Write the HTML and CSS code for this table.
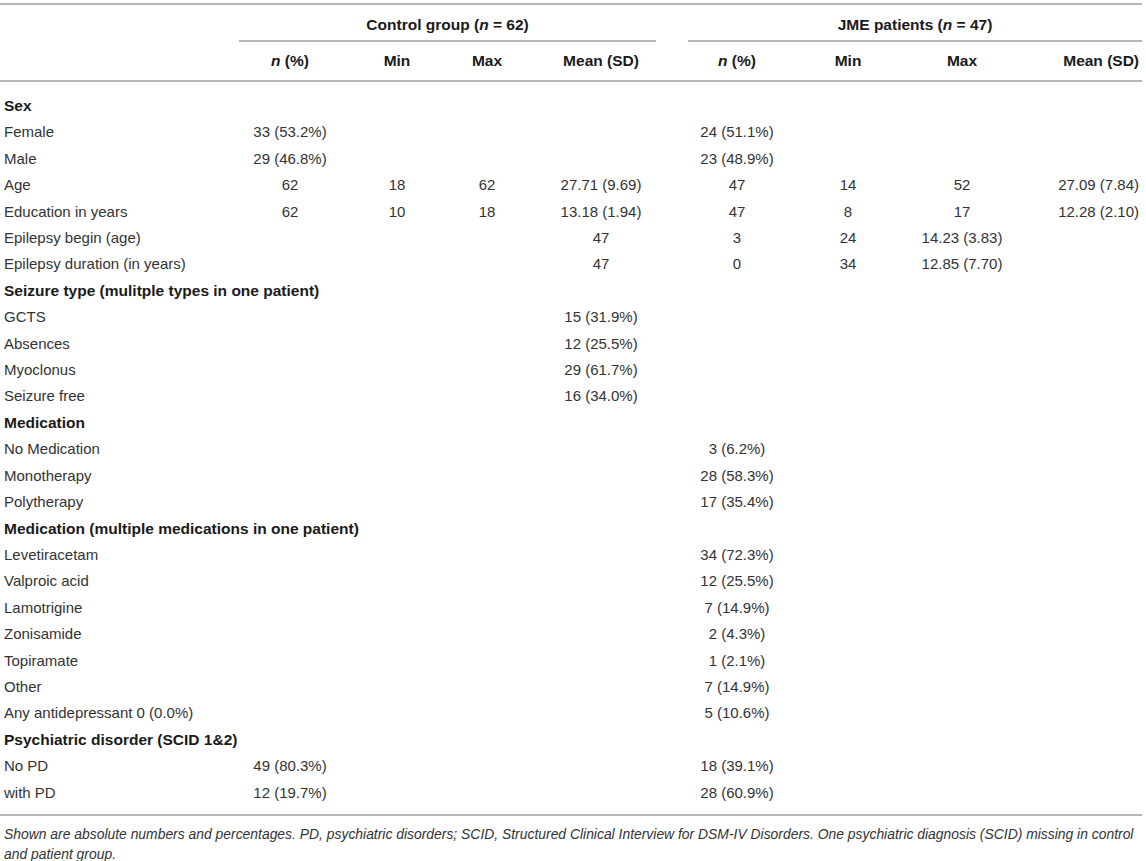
FILE: index.html
```html
<!DOCTYPE html>
<html lang="en">
<head>
<meta charset="utf-8">
<title>Demographic and clinical characteristics</title>
<link rel="stylesheet" href="styles.css">
</head>
<body>
<div class="wrap">
<table class="tbl">
  <colgroup>
    <col class="c-label">
    <col class="c-n1"><col class="c-min1"><col class="c-max1"><col class="c-mean1">
    <col class="c-n2"><col class="c-min2"><col class="c-max2"><col class="c-mean2">
  </colgroup>
  <thead>
    <tr class="h1">
      <th></th>
      <th colspan="4" class="grp"><div class="grp-in grp-a">Control group (<i>n</i> = 62)</div></th>
      <th colspan="4" class="grp"><div class="grp-in grp-b">JME patients (<i>n</i> = 47)</div></th>
    </tr>
    <tr class="h2">
      <th></th>
      <th><i>n</i> (%)</th><th>Min</th><th>Max</th><th>Mean (SD)</th>
      <th><i>n</i> (%)</th><th>Min</th><th>Max</th><th class="last">Mean (SD)</th>
    </tr>
  </thead>
  <tbody>
    <tr class="sec"><td>Sex</td><td></td><td></td><td></td><td></td><td></td><td></td><td></td><td></td></tr>
    <tr><td>Female</td><td>33 (53.2%)</td><td></td><td></td><td></td><td>24 (51.1%)</td><td></td><td></td><td></td></tr>
    <tr><td>Male</td><td>29 (46.8%)</td><td></td><td></td><td></td><td>23 (48.9%)</td><td></td><td></td><td></td></tr>
    <tr><td>Age</td><td>62</td><td>18</td><td>62</td><td>27.71 (9.69)</td><td>47</td><td>14</td><td>52</td><td class="last">27.09 (7.84)</td></tr>
    <tr><td>Education in years</td><td>62</td><td>10</td><td>18</td><td>13.18 (1.94)</td><td>47</td><td>8</td><td>17</td><td class="last">12.28 (2.10)</td></tr>
    <tr><td>Epilepsy begin (age)</td><td></td><td></td><td></td><td>47</td><td>3</td><td>24</td><td>14.23 (3.83)</td><td></td></tr>
    <tr><td>Epilepsy duration (in years)</td><td></td><td></td><td></td><td>47</td><td>0</td><td>34</td><td>12.85 (7.70)</td><td></td></tr>
    <tr class="sec"><td>Seizure type (mulitple types in one patient)</td><td></td><td></td><td></td><td></td><td></td><td></td><td></td><td></td></tr>
    <tr><td>GCTS</td><td></td><td></td><td></td><td>15 (31.9%)</td><td></td><td></td><td></td><td></td></tr>
    <tr><td>Absences</td><td></td><td></td><td></td><td>12 (25.5%)</td><td></td><td></td><td></td><td></td></tr>
    <tr><td>Myoclonus</td><td></td><td></td><td></td><td>29 (61.7%)</td><td></td><td></td><td></td><td></td></tr>
    <tr><td>Seizure free</td><td></td><td></td><td></td><td>16 (34.0%)</td><td></td><td></td><td></td><td></td></tr>
    <tr class="sec"><td>Medication</td><td></td><td></td><td></td><td></td><td></td><td></td><td></td><td></td></tr>
    <tr><td>No Medication</td><td></td><td></td><td></td><td></td><td>3 (6.2%)</td><td></td><td></td><td></td></tr>
    <tr><td>Monotherapy</td><td></td><td></td><td></td><td></td><td>28 (58.3%)</td><td></td><td></td><td></td></tr>
    <tr><td>Polytherapy</td><td></td><td></td><td></td><td></td><td>17 (35.4%)</td><td></td><td></td><td></td></tr>
    <tr class="sec"><td>Medication (multiple medications in one patient)</td><td></td><td></td><td></td><td></td><td></td><td></td><td></td><td></td></tr>
    <tr><td>Levetiracetam</td><td></td><td></td><td></td><td></td><td>34 (72.3%)</td><td></td><td></td><td></td></tr>
    <tr><td>Valproic acid</td><td></td><td></td><td></td><td></td><td>12 (25.5%)</td><td></td><td></td><td></td></tr>
    <tr><td>Lamotrigine</td><td></td><td></td><td></td><td></td><td>7 (14.9%)</td><td></td><td></td><td></td></tr>
    <tr><td>Zonisamide</td><td></td><td></td><td></td><td></td><td>2 (4.3%)</td><td></td><td></td><td></td></tr>
    <tr><td>Topiramate</td><td></td><td></td><td></td><td></td><td>1 (2.1%)</td><td></td><td></td><td></td></tr>
    <tr><td>Other</td><td></td><td></td><td></td><td></td><td>7 (14.9%)</td><td></td><td></td><td></td></tr>
    <tr><td>Any antidepressant 0 (0.0%)</td><td></td><td></td><td></td><td></td><td>5 (10.6%)</td><td></td><td></td><td></td></tr>
    <tr class="sec"><td>Psychiatric disorder (SCID 1&amp;2)</td><td></td><td></td><td></td><td></td><td></td><td></td><td></td><td></td></tr>
    <tr><td>No PD</td><td>49 (80.3%)</td><td></td><td></td><td></td><td>18 (39.1%)</td><td></td><td></td><td></td></tr>
    <tr><td>with PD</td><td>12 (19.7%)</td><td></td><td></td><td></td><td>28 (60.9%)</td><td></td><td></td><td></td></tr>
  </tbody>
</table>
<p class="note">Shown are absolute numbers and percentages. PD, psychiatric disorders; SCID, Structured Clinical Interview for DSM-IV Disorders. One psychiatric diagnosis (SCID) missing in control and patient group.</p>
</div>
</body>
</html>
```

FILE: styles.css
```css
html, body {
  margin: 0;
  padding: 0;
  background: #ffffff;
}

body {
  font-family: "Liberation Sans", Arial, Helvetica, sans-serif;
  color: #333333;
}

.wrap {
  width: 1146px;
  padding-top: 3px;
}

.tbl {
  width: 1142px;
  table-layout: fixed;
  border-collapse: separate;
  border-spacing: 0;
  font-size: 15px;
}

.c-label { width: 239px; }
.c-n1 { width: 102px; }
.c-min1 { width: 112px; }
.c-max1 { width: 68px; }
.c-mean1 { width: 160px; }
.c-n2 { width: 112px; }
.c-min2 { width: 110px; }
.c-max2 { width: 118px; }
.c-mean2 { width: 121px; }

.tbl th {
  font-weight: bold;
  font-size: 15.5px;
  color: #1a1a1a;
  padding: 0;
  text-align: center;
  white-space: nowrap;
}

.tbl th i {
  font-style: italic;
}

.h1 th {
  border-top: 2px solid #b5b5b5;
  height: 37px;
  vertical-align: bottom;
}

.grp-in {
  border-bottom: 2px solid #b5b5b5;
  height: 37px;
  line-height: 39px;
  box-sizing: border-box;
}

.grp-a {
  margin-right: 25px;
}

.grp-b {
  margin-left: 7px;
}

.h2 th {
  height: 38px;
  line-height: 38px;
  border-bottom: 2px solid #b5b5b5;
}

.tbl th.last,
.tbl td.last {
  text-align: right;
  padding-right: 3px;
}

.tbl td {
  padding: 0;
  height: 26.4px;
  line-height: 26.4px;
  text-align: center;
  white-space: nowrap;
  vertical-align: middle;
}

.tbl td:first-child {
  text-align: left;
  padding-left: 4px;
  overflow: visible;
}

.sec td:first-child {
  font-weight: bold;
  font-size: 15.5px;
  color: #1a1a1a;
}

.tbl tbody tr:first-child td {
  padding-top: 11px;
}

.tbl tbody tr:last-child td {
  padding-bottom: 8px;
  border-bottom: 2px solid #b5b5b5;
}

.note {
  margin: 0;
  padding: 8px 0 0 4px;
  font-size: 13.9px;
  line-height: 20px;
  font-style: italic;
  color: #333333;
}
```
